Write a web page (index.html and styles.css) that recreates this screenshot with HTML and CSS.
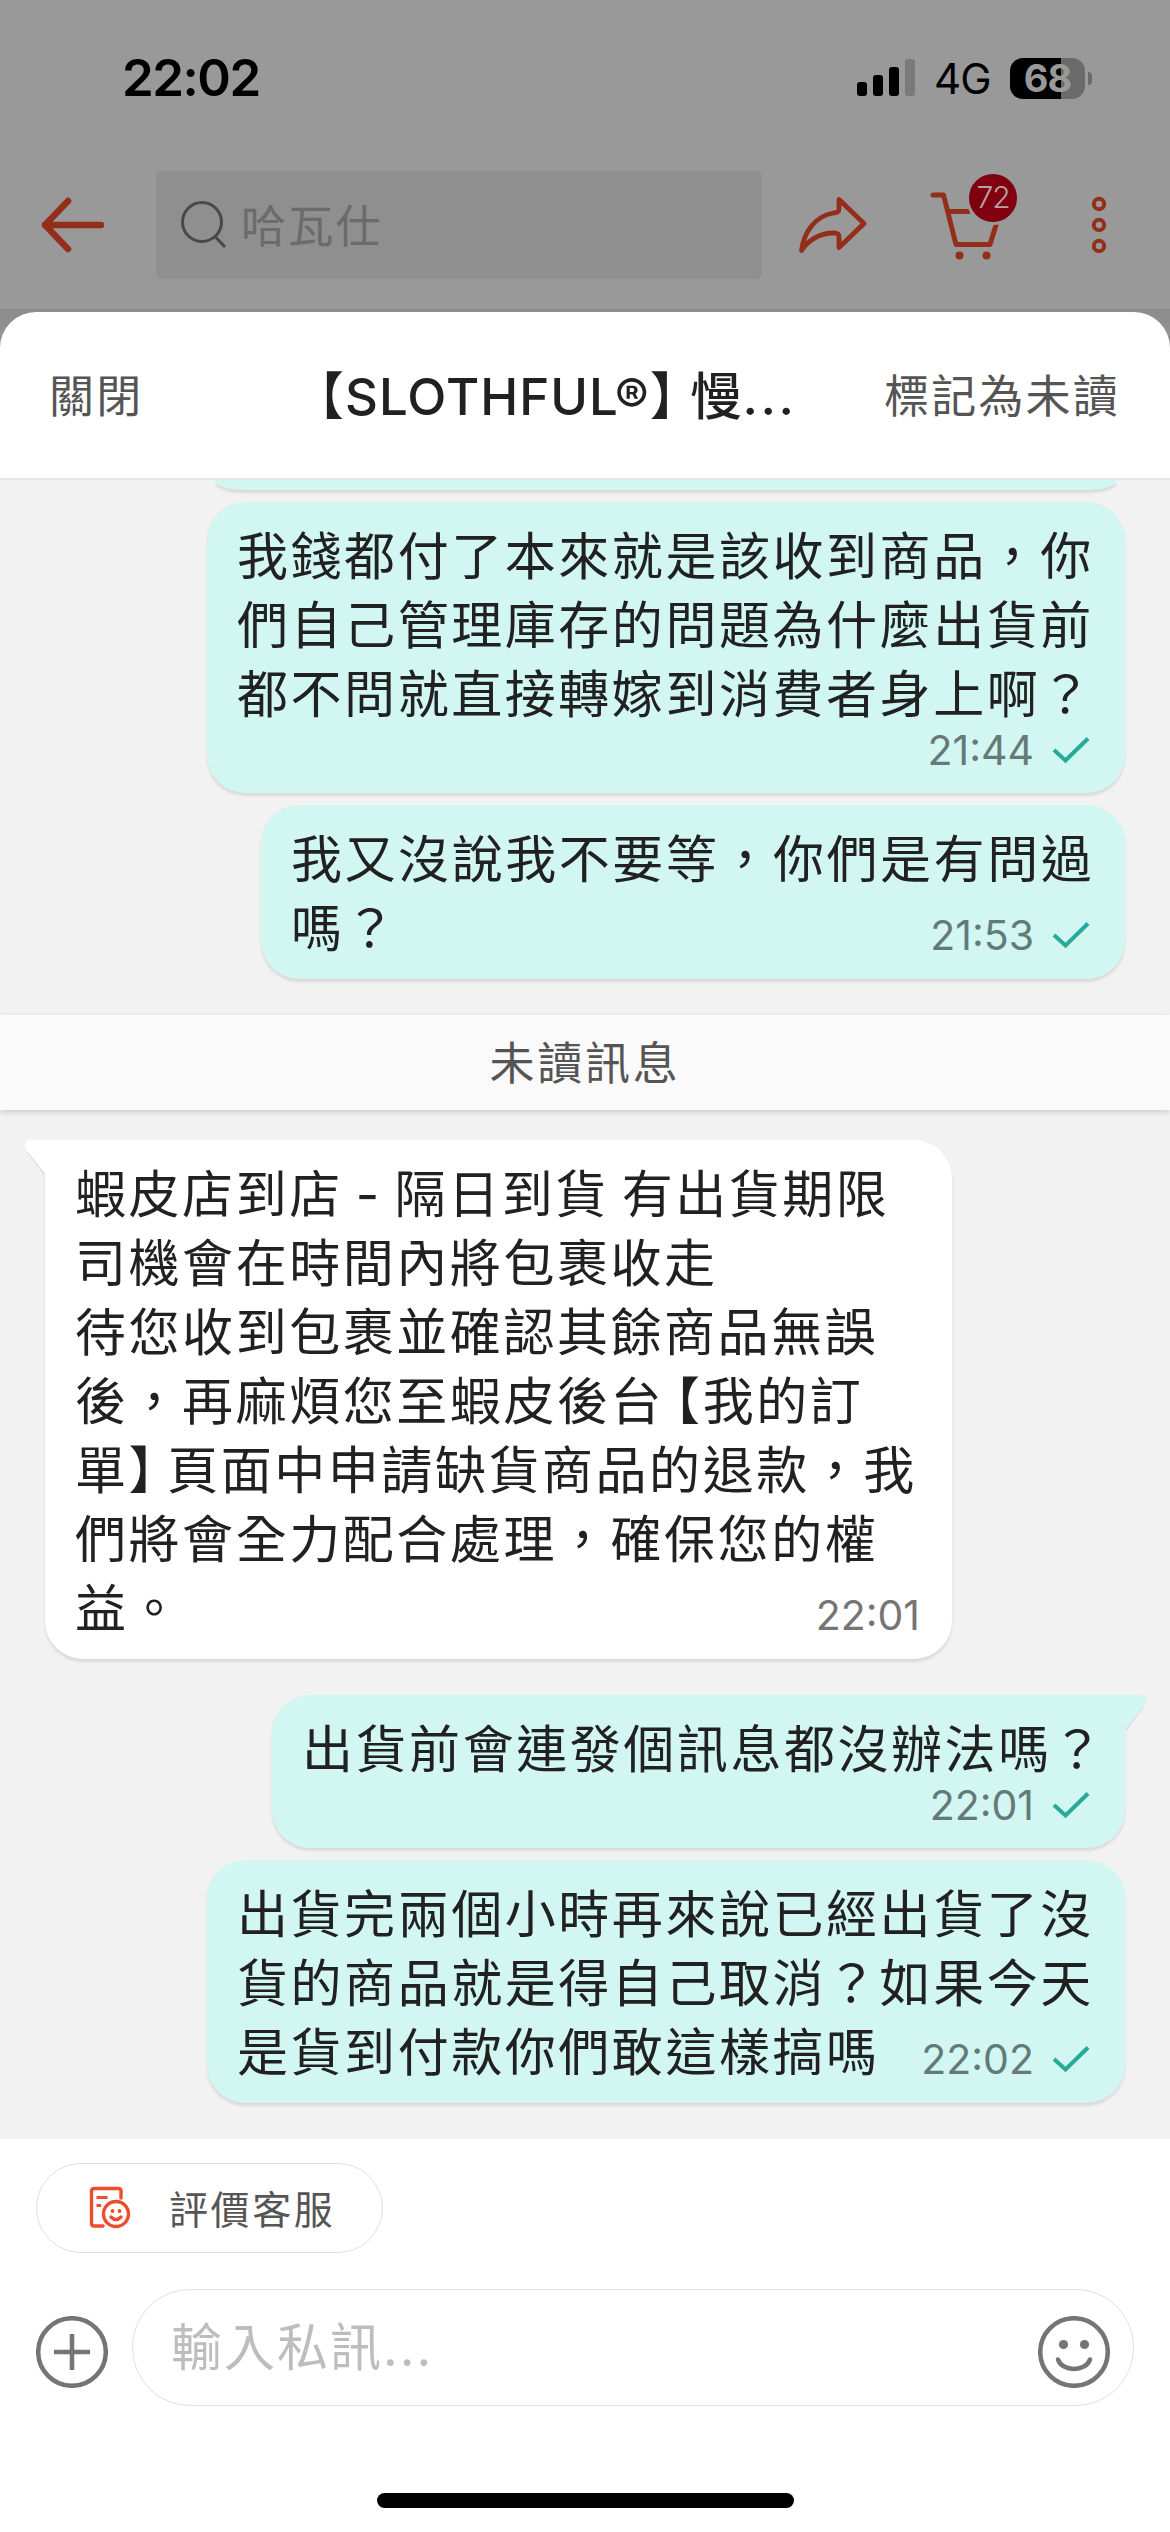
FILE: index.html
```html
<!DOCTYPE html>
<html lang="zh-Hant">
<head>
<meta charset="utf-8">
<title>聊聊</title>
<link rel="stylesheet" href="styles.css">
</head>
<body>
<div class="screen">
  <div class="backdrop">
    <div class="status">
      <span class="clock">22:02</span>
      <div class="status-right">
        <svg class="signal" width="58" height="38" viewBox="0 0 58 38">
          <rect x="0" y="23" width="10" height="14" rx="3"/>
          <rect x="16" y="16" width="10" height="21" rx="3"/>
          <rect x="32" y="8" width="10" height="29" rx="3"/>
          <rect x="48" y="0" width="10" height="37" rx="3" fill="#7a7a7a"/>
        </svg>
        <span class="network">4G</span>
        <div class="battery"><span class="battery-level">68</span></div>
        <span class="battery-nub"></span>
      </div>
    </div>
    <div class="nav">
      <svg class="back" width="64" height="56" viewBox="0 0 64 56"><path d="M60 28H4M27 4L4 28L27 52"/></svg>
      <div class="search">
        <svg width="46" height="52" viewBox="0 0 46 52"><circle cx="21" cy="23" r="19.500"/><path d="M33.500 37L44 48"/></svg>
        <span>哈瓦仕</span>
      </div>
      <svg class="share" width="68" height="58" viewBox="0 0 68 58"><path d="M40 3.500L65 27.500L40 51.500V41C40 37.500 38.500 37 34.500 37C21 37 9 44 2.500 54.500C5 36 16 20 34.500 17C38.500 16.500 40 16 40 12.500Z"/></svg>
      <div class="cart">
        <svg width="66" height="70" viewBox="0 0 66 70"><path class="line" d="M3 5H13.500L26 54.500H60L66 35"/><path class="line flat" d="M18 21.500H40"/><circle cx="29.500" cy="65.500" r="4"/><circle cx="56.500" cy="65.500" r="4"/></svg>
        <span class="badge">72</span>
      </div>
      <svg class="more" width="16" height="58" viewBox="0 0 16 58"><circle cx="8" cy="8" r="5.200"/><circle cx="8" cy="29" r="5.200"/><circle cx="8" cy="50" r="5.200"/></svg>
    </div>
  </div>

  <div class="sheet">
    <header class="sheet-head">
      <span class="action">關閉</span>
      <h1 class="title"><span class="open">【</span>SLOTHFUL®<span class="close">】</span>慢<span class="dots">...</span></h1>
      <span class="action mark">標記為未讀</span>
    </header>

    <main class="chat">
      <div class="bubble sent clipped"></div>
      <div class="bubble sent stacked">
        <p>我錢都付了本來就是該收到商品，你<br>們自己管理庫存的問題為什麼出貨前<br>都不問就直接轉嫁到消費者身上啊？</p>
        <div class="meta">21:44<svg class="tick" width="38" height="28" viewBox="0 0 38 28"><path d="M2 14L13.500 24.500L36 2.500"/></svg></div>
      </div>
      <div class="bubble sent two-line">
        <p>我又沒說我不要等，你們是有問過<br>嗎？</p>
        <div class="meta">21:53<svg class="tick" width="38" height="28" viewBox="0 0 38 28"><path d="M2 14L13.500 24.500L36 2.500"/></svg></div>
      </div>
      <div class="unread">未讀訊息</div>
      <div class="bubble received">
        <svg class="tail" width="22" height="36" viewBox="0 0 22 36"><path class="edge" d="M3 11L20 34"/><path d="M23 0H6C0 0-2 5 1.500 10L20 33.500H23Z"/></svg>
        <p>蝦皮店到店 - 隔日到貨 有出貨期限<br>司機會在時間內將包裹收走<br>待您收到包裹並確認其餘商品無誤<br>後，再麻煩您至蝦皮後台<span class="open">【</span>我的訂<br>單<span class="close">】</span>頁面中申請缺貨商品的退款，我<br>們將會全力配合處理，確保您的權<br>益。</p>
        <div class="meta">22:01</div>
      </div>
      <div class="bubble sent stacked reply">
        <svg class="tail" width="22" height="36" viewBox="0 0 22 36"><path class="edge" d="M19 11L2 34"/><path d="M-1 0H16C22 0 24 5 20.500 10L2 33.500H-1Z"/></svg>
        <p>出貨前會連發個訊息都沒辦法嗎？</p>
        <div class="meta">22:01<svg class="tick" width="38" height="28" viewBox="0 0 38 28"><path d="M2 14L13.500 24.500L36 2.500"/></svg></div>
      </div>
      <div class="bubble sent last">
        <p>出貨完兩個小時再來說已經出貨了沒<br>貨的商品就是得自己取消？如果今天<br>是貨到付款你們敢這樣搞嗎</p>
        <div class="meta">22:02<svg class="tick" width="38" height="28" viewBox="0 0 38 28"><path d="M2 14L13.500 24.500L36 2.500"/></svg></div>
      </div>
    </main>

    <footer class="composer">
      <div class="chip">
        <svg width="42" height="44" viewBox="0 0 42 44"><path d="M32 12V5C32 3 31 2.500 29.500 2.500H5C3.500 2.500 2.500 3.500 2.500 5V37C2.500 39 3.500 40 5 40H14"/><path class="rule" d="M7.500 11.500H18.500M7.500 19.500H12"/><circle cx="27" cy="28" r="12.500"/><path d="M22 31Q27 36 32 31"/><circle class="dot" cx="23.500" cy="25" r="1.900"/><circle class="dot" cx="30.500" cy="25" r="1.900"/></svg>
        <span>評價客服</span>
      </div>
      <div class="entry">
        <svg class="round" width="72" height="72" viewBox="0 0 72 72"><circle cx="36" cy="36" r="33.800"/><path d="M18 36H54M36 18V54"/></svg>
        <div class="field">
          <span>輸入私訊...</span>
          <svg class="round" width="72" height="72" viewBox="0 0 72 72"><circle cx="36" cy="36" r="33.800"/><path class="smile" d="M20 43.500C24 56 48 56 52 43.500"/><circle class="dot" cx="25.500" cy="28.500" r="4.600"/><circle class="dot" cx="46.500" cy="28.500" r="4.600"/></svg>
        </div>
      </div>
      <div class="home-bar"></div>
    </footer>
  </div>
</div>
</body>
</html>
```
FILE: styles.css
```css
* { box-sizing: border-box; }
body {
  margin: 0;
  font-family: Inter, "Noto Sans CJK TC", sans-serif;
  color: #212121;
}
h1, p { margin: 0; }
svg { display: block; flex: none; }
.screen {
  display: flex;
  flex-direction: column;
  width: 1170px;
  height: 2532px;
  overflow: hidden;
  background: linear-gradient(#8b8b8b 309px, #999 352px);
}

/* dimmed page behind the sheet */
.backdrop { height: 309px; margin-bottom: 3px; background: #999; flex: none; }
.status {
  display: flex;
  align-items: center;
  justify-content: space-between;
  height: 156px;
  padding: 0 78px 0 122px;
  color: #000;
}
.clock { padding-bottom: 2px; font-size: 51px; font-weight: 600; letter-spacing: -1.5px; }
.status-right { display: flex; align-items: center; }
.network { margin-left: 19px; width: 57px; font-size: 42px; font-weight: 400; letter-spacing: -1px; }
.battery {
  width: 75px;
  height: 41px;
  margin-left: 19px;
  border-radius: 13px;
  background: linear-gradient(90deg, #000 51px, #6b6b6b 51px);
  text-align: center;
}
.battery-level { display: block; font-size: 38px; line-height: 41px; font-weight: 700; color: #999; letter-spacing: -1px; }
.battery-nub { width: 4px; height: 13px; margin-left: 3px; border-radius: 0 5px 5px 0; background: #6b6b6b; }
.nav { display: flex; align-items: center; height: 138px; padding-left: 41px; }
.nav svg { fill: none; stroke: #932e1b; stroke-width: 4; stroke-linejoin: round; }
.nav .back { stroke-width: 6.5; stroke-linecap: round; }
.search {
  display: flex;
  align-items: center;
  width: 606px;
  height: 108px;
  margin-left: 51px;
  padding-left: 25px;
  border-radius: 6px;
  background: #8f8f8f;
  font-size: 45px;
  letter-spacing: 2.2px;
  color: #6b6b6b;
}
.nav .search svg { stroke: #484848; stroke-width: 3; }
.search span { margin-left: 14px; padding-top: 4px; line-height: 66px; }
.nav .share { margin-left: 37px; stroke-width: 4.8; }
.cart { position: relative; margin-left: 63px; }
.cart svg { overflow: visible; }
.cart .line { stroke-width: 5; stroke-linecap: round; }
.cart .line.flat { stroke-linecap: butt; }
.cart circle { fill: #932e1b; stroke: none; }
.badge {
  position: absolute;
  left: 36px;
  top: -19px;
  width: 54px;
  height: 54px;
  border: 3px solid #999;
  border-radius: 50%;
  background: #800010;
  color: #b8a0a3;
  font-size: 30px;
  font-weight: 300;
  line-height: 47px;
  letter-spacing: -1px;
  text-align: center;
}
.more { margin-left: 95px; }

/* chat sheet */
.sheet { display: flex; flex-direction: column; flex: 1; border-radius: 36px 36px 0 0; background: #fff; overflow: hidden; }
.sheet-head {
  display: flex;
  align-items: center;
  height: 168px;
  padding: 0 50px 4px 49px;
  border-bottom: 2px solid #e6e6e6;
  flex: none;
}
.action { width: 94px; font-size: 45px; letter-spacing: 2.2px; white-space: nowrap; color: #555; }
.mark { width: auto; margin-left: auto; }
.title { margin-left: 165px; font-size: 51px; font-weight: 500; letter-spacing: 1px; white-space: nowrap; }
.dots { letter-spacing: 2.6px; }
.open, .close { font-feature-settings: "halt"; }
.open { margin-left: 10.5px; }
.close { margin-right: 10.5px; }
.title .close { margin-right: 14px; }
.chat { height: 1659px; background: #f2f2f2; overflow: hidden; flex: none; }
.bubble {
  position: relative;
  width: 918px;
  margin-left: 207px;
  padding: 20px 30px 0;
  border-radius: 38px;
  background: #d2f6f1;
  box-shadow: 0 3px 3px rgba(0, 0, 0, .1);
  font-size: 51px;
  line-height: 69px;
  letter-spacing: 2.55px;
  word-spacing: -4px;
  white-space: nowrap;
}
.meta {
  position: absolute;
  right: 35px;
  bottom: 19px;
  display: flex;
  align-items: center;
  gap: 18px;
  font-size: 41px;
  line-height: 50px;
  letter-spacing: 0;
  color: #647a77;
}
.tick { fill: none; stroke: #26aa99; stroke-width: 4; }
.bubble.clipped { width: 902px; height: 10px; margin-left: 215px; padding: 0; border-radius: 0 0 30px 30px / 0 0 10px 10px; }
.stacked { height: 291px; margin-top: 12px; }
.stacked .meta { bottom: 18px; }
.two-line { width: 864px; height: 174px; margin: 12px 0 0 261px; }
.unread {
  height: 95px;
  margin-top: 36px;
  padding-top: 1px;
  background: #fafafa;
  box-shadow: 0 2px 6px rgba(0, 0, 0, .16);
  font-size: 45px;
  line-height: 95px;
  letter-spacing: 2.8px;
  text-align: center;
  color: #555;
}
.received { width: 907px; height: 519px; margin: 30px 0 0 45px; border-top-left-radius: 0; background: #fff; }
.received .meta { right: 32px; color: #757575; }
.tail { position: absolute; top: 0; fill: #d2f6f1; overflow: visible; }
.tail .edge { fill: none; stroke: rgba(0, 0, 0, .08); stroke-width: 3; }
.received .tail { left: -20px; fill: #fff; }
.reply { width: 853px; height: 153px; margin: 36px 0 0 272px; border-top-right-radius: 0; }
.reply .tail { right: -21px; }
.last { height: 243px; margin-top: 12px; }

/* message composer */
.composer { display: flex; flex-direction: column; flex: 1; padding: 24px 36px 0; }
.chip {
  display: flex;
  align-items: center;
  width: 347px;
  height: 90px;
  padding-left: 52px;
  border: 1px solid #e0e0e0;
  border-radius: 45px;
  font-size: 39px;
  letter-spacing: 2.6px;
  color: #555;
}
.chip svg { fill: none; stroke: #ee4d2d; stroke-width: 3.4; stroke-linecap: round; }
.chip .rule { stroke-width: 3; stroke-linecap: butt; }
.chip .dot { fill: #ee4d2d; stroke: none; }
.chip span { margin-left: 38px; padding-bottom: 3px; }
.entry { display: flex; align-items: center; gap: 24px; margin-top: 36px; }
.field {
  display: flex;
  align-items: center;
  justify-content: space-between;
  width: 1002px;
  height: 117px;
  padding: 0 23px 0 38px;
  border: 1px solid #e0e0e0;
  border-radius: 58px;
  flex: none;
  font-size: 51px;
  letter-spacing: 2px;
  color: #bdbdbd;
}
.field span { padding-bottom: 8px; }
.round { margin-top: 8px; fill: none; stroke: #757575; stroke-width: 4.5; }
.round .smile { stroke-linecap: round; }
.round .dot { fill: #757575; stroke: none; }
.home-bar { width: 417px; height: 15px; margin: 87px auto 0; border-radius: 8px; background: #000; }
```
